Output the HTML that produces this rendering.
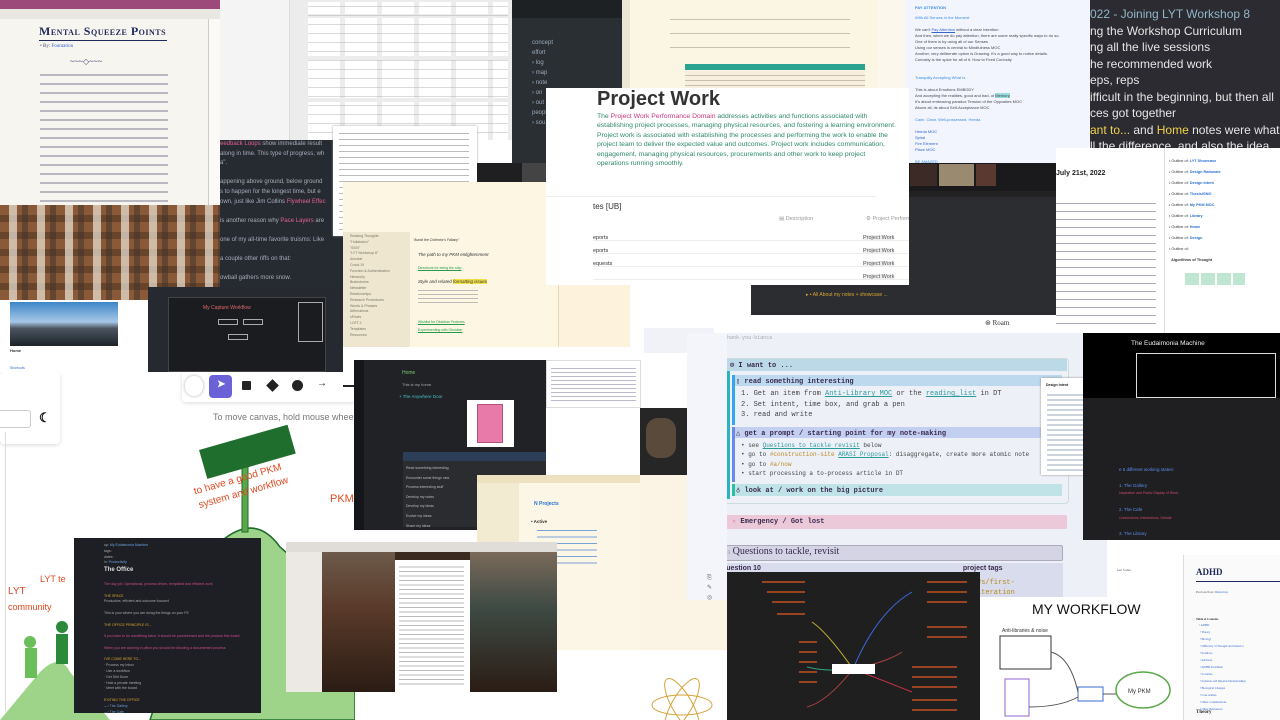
<!DOCTYPE html>
<html><head><meta charset="utf-8"><style>
*{margin:0;padding:0;box-sizing:border-box}
body{width:1280px;height:720px;overflow:hidden;background:#fff;position:relative;font-family:"Liberation Sans",sans-serif}
.p{position:absolute;overflow:hidden}
.t{position:absolute;white-space:nowrap}
.m{font-family:"Liberation Mono",monospace}
</style></head><body>

<!-- Sketch canvas top center -->
<div class="p" style="left:220px;top:0;width:292px;height:140px;background:#ececec">
 <div class="p" style="left:0;top:0;width:70px;height:140px;background:#f4f4f4;border-right:1px solid #ddd"></div>
 <div style="position:absolute;left:88px;top:2px;width:200px;height:140px;background:repeating-linear-gradient(90deg,#fff 0 32px,#ececec 32px 37px)"></div>
 <div style="position:absolute;left:88px;top:0;width:200px;height:140px;background:repeating-linear-gradient(0deg,transparent 0 38px,#ececec 38px 42px)"></div>
 <div style="position:absolute;left:88px;top:0;width:200px;height:140px;background:repeating-linear-gradient(180deg,transparent 0 6px,rgba(150,150,150,.35) 6px 7px,transparent 7px 9px)"></div>
</div>

<!-- Mental squeeze points -->
<div class="p" style="left:0;top:0;width:220px;height:205px;background:#f7f5ef">
 <div class="p" style="left:0;top:0;width:220px;height:9px;background:#9c4a7a"></div>
 <div class="p" style="left:0;top:9px;width:220px;height:10px;background:#e9e7e2"></div>
 <div class="p" style="left:208px;top:19px;width:12px;height:190px;background:#fbfaf6;border-left:1px solid #ccc"></div>
 <div class="t" style="left:39px;top:24px;font:bold 12px 'Liberation Serif',serif;color:#1f2a5a;font-variant:small-caps;letter-spacing:.5px">Mental Squeeze Points</div>
 <div style="position:absolute;left:39px;top:40px;width:128px;height:1px;background:#1f2a5a"></div>
 <div class="t" style="left:40px;top:44px;font:5px serif;color:#447">• By: <span style="color:#36c">Fountation</span></div>
 <div class="t" style="left:70px;top:57px;font:8px serif;color:#447">~~~◇~~~</div>
 <div style="position:absolute;left:40px;top:70px;width:128px;height:135px;background:repeating-linear-gradient(180deg,transparent 0 4px,#b9b8c0 4px 6px,transparent 6px 9px)"></div>
</div>

<!-- Dark teal panel -->
<div class="p" style="left:512px;top:0;width:118px;height:165px;background:#2a2f33">
 <div class="p" style="left:0;top:0;width:118px;height:18px;background:#1d2124"></div>
 <div class="p" style="left:110px;top:0;width:8px;height:165px;background:#eee6d5"></div>
 <div style="position:absolute;left:20px;top:38px;font:6px sans-serif;color:#9ab;line-height:10px">concept<br>effort<br>› log<br>› map<br>› note<br>› on<br>› out<br>people<br>› sou</div>
</div>

<!-- Zotero cream -->
<div class="p" style="left:630px;top:0;width:250px;height:88px;background:#fbf5e3">
 <div style="position:absolute;left:40px;top:8px;width:180px;height:50px;background:repeating-linear-gradient(180deg,transparent 0 11px,#c9c2b0 11px 12px,transparent 12px 14px)"></div>
 <div style="position:absolute;left:55px;top:64px;width:180px;height:6px;background:#2aa38f"></div>
 <div style="position:absolute;left:55px;top:71px;width:180px;height:17px;background:repeating-linear-gradient(180deg,#f8f0dc 0 4px,#c7c0ae 4px 5px)"></div>
</div>
<div class="p" style="left:877px;top:0;width:28px;height:88px;background:#fbf7ec"></div>

<!-- Pay attention -->
<div class="p" style="left:905px;top:0;width:185px;height:163px;background:#f2f5fd">
 <div class="t" style="left:10px;top:5px;font:bold 4px sans-serif;color:#3a8be0">PAY ATTENTION</div>
 <div style="position:absolute;left:10px;top:15px;font:4px/6px sans-serif;color:#445">
 <span style="color:#3a8be0">With All Senses in the Moment</span><br><br>We can't <u style="color:#36c">Pay Attention</u> without a clear Intention<br>And then, when we do pay attention, there are some really specific ways to do so.<br>One of them is by using all of our Senses<br>Using our senses is central to Mindfulness MOC<br>Another, very deliberate option is Drawing. It's a good way to notice details.<br>Curiosity is the spice for all of it. How to Feed Curiosity<br><br><br><span style="color:#3a8be0">Tranquilly Accepting What Is</span><br><br>This is about Emotions EMBODY<br>And accepting the realities, good and bad, of <span style="background:#9dd">Memory</span><br>It's about embracing paradox Tension of the Opposites MOC<br>Above all, its about Self-Acceptance MOC<br><br><span style="color:#3a8be0">Calm. Clear. Well-possessed. Heeda</span><br><br><span style="color:#36c">Heeda MOC<br>Spiral<br>Fire Element<br>Place MOC</span><br><br><span style="color:#3a8be0">BE AMAZED</span></div>
</div>

<!-- Dark LYT workshop -->
<div class="p" style="left:1090px;top:0;width:190px;height:148px;background:#2b2b31">
 <div style="position:absolute;left:0;top:6px;font:12px/16.5px 'Liberation Sans',sans-serif;color:#e6e6e6;white-space:nowrap">
 <span style="color:#8fb7c9">022 - Joining LYT Workshop 8</span><br>ng the Workshop Curriculum<br>ng all the live sessions<br>he recommended work<br>eps, reps<br>ifficult in the beginning, but then all<br>ces got together<br><span style="color:#f0d34a">ant to...</span> and <span style="color:#f0d34a">Home</span> notes were what<br>ll the difference, and also the idea<br><i style="color:#a88ef0">ucture must be earned!</i></div>
</div>

<!-- Feedback dark -->
<div class="p" style="left:220px;top:140px;width:125px;height:150px;background:#262b31">
 <div style="position:absolute;left:0;top:0;font:6px/9.6px sans-serif;color:#aab;white-space:nowrap"><span style="color:#e06090">eedback Loops</span> show immediate result<br>along in time. This type of progress, wh<br>a".<br><br>appening above ground, below ground<br>s to happen for the longest time, but e<br>own, just like Jim Collins <span style="color:#e06090">Flywheel Effec</span><br><br>is another reason why <span style="color:#e06090">Pace Layers</span> are<br><br>one of my all-time favorite truisms: Like<br><br>a couple other riffs on that:<br><br>owball gathers more snow.</div>
</div>

<!-- White doc -->
<div class="p" style="left:333px;top:126px;width:144px;height:110px;background:#fff;box-shadow:0 0 2px #999">
 <div style="position:absolute;left:6px;top:4px;width:130px;height:100px;background:repeating-linear-gradient(180deg,transparent 0 3px,#bbb 3px 4px,transparent 4px 6px)"></div>
</div>

<!-- Obsidian cream -->
<div class="p" style="left:343px;top:182px;width:287px;height:165px;background:#fdf6e3">
 <div class="p" style="left:0;top:50px;width:67px;height:115px;background:#efe6cf"></div>
 <div style="position:absolute;left:7px;top:52px;font:3.5px/5.8px sans-serif;color:#776;white-space:pre">Reading Thoughts
"Hullabaloo"
"0000"
"LYT Workshop 8"
Annotat
Covid-19
Function &amp; Authentication
Hierarchy
Brainstorms
Newsletter
Relationships
Research Procedures
Words &amp; Phrases
Affirmations
sPixels
LOFT-1
Templates
Resources</div>
 <div class="t" style="left:70px;top:56px;font:italic 3.5px sans-serif;color:#333">"Avoid the Collector's Fallacy"</div>
 <div class="t" style="left:75px;top:70px;font:italic 4.5px sans-serif;color:#333">The path to my PKM enlightenment</div>
 <div class="t" style="left:75px;top:84px;font:3.5px sans-serif;color:#2a9a4a;text-decoration:underline">Directions for being the ship</div>
 <div class="t" style="left:75px;top:97px;font:italic 4.5px sans-serif;color:#333">Style and related <span style="background:#f5e24a">formatting issues</span></div>
 <div style="position:absolute;left:75px;top:105px;width:60px;height:16px;background:repeating-linear-gradient(180deg,transparent 0 3px,#bbb 3px 4px)"></div>
 <div class="t" style="left:75px;top:138px;font:3.5px sans-serif;color:#2a9a4a;text-decoration:underline">Wishlist for Obsidian Features</div>
 <div class="t" style="left:75px;top:146px;font:3.5px sans-serif;color:#2a9a4a;text-decoration:underline">Experimenting with Obsidian</div>
 <div class="p" style="left:215px;top:0;width:72px;height:165px;background:#fdf3dd;border-left:1px solid #e4d9be"></div>
 <div style="position:absolute;left:222px;top:25px;width:55px;height:60px;background:repeating-linear-gradient(180deg,transparent 0 3px,#7bbf7b 3px 4px)"></div>
</div>
<div class="p" style="left:477px;top:163px;width:153px;height:19px;background:#1f1f22">
 <div class="p" style="left:45px;top:0;width:30px;height:19px;background:#444"></div>
 <div class="p" style="left:78px;top:1px;width:18px;height:18px;background:#6a4a3a"></div>
 <div class="p" style="left:100px;top:1px;width:18px;height:18px;background:#7a8aa0"></div>
</div>

<!-- Project Work -->
<div class="p" style="left:546px;top:88px;width:363px;height:197px;background:#fff">
 <div class="t" style="left:51px;top:0;font:bold 20px 'Liberation Sans',sans-serif;color:#333">Project Work</div>
 <div style="position:absolute;left:51px;top:24px;width:300px;font:6.8px/9.4px sans-serif;color:#2e8a6a">The <span style="color:#d0357a">Project Work Performance Domain</span> addresses activities and functions associated with establishing project processes, managing physical resources, and fostering a learning environment. Project work is associated with establishing the processes and performing the work to enable the project team to deliver the expected value and outcomes. Project work includes communication, engagement, managing physical resources, procurements and other work to keep project operations running smoothly.</div>
 <div style="position:absolute;left:0;top:108px;width:330px;height:1px;background:#eee"></div>
 <div class="t" style="left:47px;top:114px;font:8px sans-serif;color:#333">tes [UB]</div>
 <div class="t" style="left:233px;top:128px;font:5.5px sans-serif;color:#999">▤ Description</div>
 <div class="t" style="left:320px;top:128px;font:5.5px sans-serif;color:#999">⚙ Project Performa</div>
 <div style="position:absolute;left:47px;top:140px;width:316px;height:57px;background:repeating-linear-gradient(180deg,transparent 0 12px,#eee 12px 13px)"></div>
 <div class="t" style="left:317px;top:144px;font:5.5px/12.9px sans-serif;color:#555;white-space:pre"><span style="background:#eee">Project Work</span>
<span style="background:#eee">Project Work</span>
<span style="background:#eee">Project Work</span>
<span style="background:#eee">Project Work</span></div>
 <div class="t" style="left:47px;top:144px;font:5.5px/12.9px sans-serif;color:#333;white-space:pre">eports
eports
equests</div>
</div>

<!-- Dark video terminal -->
<div class="p" style="left:909px;top:163px;width:147px;height:152px;background:#2b2d31">
 <div class="p" style="left:0;top:0;width:147px;height:28px;background:#1a1a1c"></div>
 <div class="p" style="left:1px;top:1px;width:27px;height:22px;background:#3b2a26"></div>
 <div class="p" style="left:30px;top:1px;width:35px;height:22px;background:#9a8a70"></div>
 <div class="p" style="left:67px;top:1px;width:20px;height:22px;background:#5a3a30"></div>
 <div class="p" style="left:0;top:28px;width:147px;height:6px;background:#222"></div>
</div>
<div class="p" style="left:751px;top:285px;width:305px;height:30px;background:#2b2d31">
 <div class="t" style="left:55px;top:7px;font:5px sans-serif;color:#d9a530">▸ • All About my notes + showcase ...</div>
</div>

<!-- Roam -->
<div class="p" style="left:1056px;top:148px;width:224px;height:185px;background:#fff">
 <div class="t" style="left:0;top:22px;font:bold 7px sans-serif;color:#222">July 21st, 2022</div>
 <div style="position:absolute;left:0;top:50px;width:100px;height:130px;background:repeating-linear-gradient(180deg,transparent 0 5px,#aab 5px 6px,transparent 6px 8px)"></div>
 <div class="p" style="left:108px;top:0;width:116px;height:185px;border-left:1px solid #ddd;background:#fff">
  <div style="position:absolute;left:4px;top:8px;font:3.8px/11px sans-serif;color:#333;white-space:pre">• Outline of: <b style="color:#2a6fd0">LYT Showcase</b>
• Outline of: <b style="color:#2a6fd0">Design Rationale</b>
• Outline of: <b style="color:#2a6fd0">Design Intent</b>
• Outline of: <b style="color:#2a6fd0">ThesisIGNO</b>
• Outline of: <b style="color:#2a6fd0">My PKM MOC</b>
• Outline of: <b style="color:#2a6fd0">Library</b>
• Outline of: <b style="color:#2a6fd0">Home</b>
• Outline of: <b style="color:#2a6fd0">Design</b>
• Outline of:
  <b>Algorithms of Thought</b></div>
  <div class="p" style="left:20px;top:125px;width:60px;height:12px;background:repeating-linear-gradient(90deg,#bfe6d0 0 14px,transparent 14px 16px)"></div>
 </div>
</div>
<div class="p" style="left:980px;top:315px;width:76px;height:18px;background:#fff"><div class="t" style="left:5px;top:4px;font:7px serif;color:#333">⊛ Roam</div></div>

<!-- corkboard -->
<div class="p" style="left:0;top:205px;width:220px;height:95px;background:#8a5a38">
 <div style="position:absolute;inset:0;background:repeating-linear-gradient(90deg,transparent 0 9px,rgba(235,228,215,.7) 9px 17px,transparent 17px 22px,rgba(60,50,45,.5) 22px 28px),repeating-linear-gradient(0deg,transparent 0 10px,rgba(60,40,25,.45) 10px 17px)"></div>
</div>

<!-- mountain page -->
<div class="p" style="left:0;top:300px;width:148px;height:72px;background:#fff">
 <div class="p" style="left:10px;top:2px;width:108px;height:44px;background:linear-gradient(180deg,#3d86c8 0,#a7c7e6 45%,#4b5560 60%,#1d2228 100%)"></div>
 <div class="t" style="left:10px;top:48px;font:bold 4px sans-serif;color:#333">Home</div>
 <div class="t" style="left:10px;top:66px;font:3.5px sans-serif;color:#36c">Shortcuts</div>
</div>

<!-- capture workflow dark -->
<div class="p" style="left:148px;top:287px;width:195px;height:85px;background:#262a30">
 <div class="p" style="left:20px;top:10px;width:158px;height:75px;background:#1a1c20;border:1px solid #444"></div>
 <div class="t" style="left:55px;top:18px;font:5px sans-serif;color:#e06a6a">My Capture Workflow</div>
 <div class="p" style="left:70px;top:32px;width:20px;height:6px;border:1px solid #aaa"></div>
 <div class="p" style="left:95px;top:32px;width:20px;height:6px;border:1px solid #aaa"></div>
 <div class="p" style="left:80px;top:47px;width:20px;height:6px;border:1px solid #aaa"></div>
 <div class="p" style="left:150px;top:15px;width:25px;height:40px;border:1px solid #aaa"></div>
</div>

<!-- Excalidraw -->
<div class="p" style="left:0;top:372px;width:355px;height:348px;background:#fff">
 <div class="p" style="left:0;top:0;width:60px;height:72px;background:#fff;border-radius:4px;box-shadow:0 1px 4px rgba(0,0,0,.15)"></div>
 <div class="p" style="left:-5px;top:38px;width:36px;height:18px;border:1px solid #ccc;border-radius:3px"></div>
 <div class="t" style="left:39px;top:38px;font:bold 13px sans-serif;color:#111">☾</div>
 <div class="p" style="left:5px;top:60px;width:1px;height:280px;background:#ddd"></div>
 <div class="p" style="left:182px;top:0;width:173px;height:30px;background:#fff;box-shadow:0 1px 4px rgba(0,0,0,.15);border-radius:4px"></div>
 <div class="p" style="left:185px;top:4px;width:18px;height:20px;border-radius:10px;background:#fff;box-shadow:0 0 3px #aaa"></div>
 <div class="p" style="left:209px;top:3px;width:23px;height:23px;border-radius:4px;background:#6a62d6"></div>
 <div class="t" style="left:217px;top:7px;font:bold 10px sans-serif;color:#fff">➤</div>
 <div class="p" style="left:242px;top:9px;width:9px;height:9px;background:#222;border-radius:1px"></div>
 <div class="p" style="left:268px;top:9px;width:9px;height:9px;background:#222;transform:rotate(45deg)"></div>
 <div class="p" style="left:292px;top:8px;width:11px;height:11px;background:#222;border-radius:50%"></div>
 <div class="t" style="left:317px;top:6px;font:bold 10px sans-serif;color:#222">→</div>
 <div class="p" style="left:343px;top:13px;width:12px;height:2px;background:#222"></div>
 <div class="t" style="left:213px;top:40px;font:9px sans-serif;color:#777">To move canvas, hold mouse wheel or sp</div>
 <svg width="355" height="348" style="position:absolute;left:0;top:0">
  <path d="M150 348 L185 240 Q205 170 240 158 Q262 150 280 175 L320 210 Q340 200 355 205 L355 348 Z" fill="#9ed48a" stroke="#1e6b2a" stroke-width="1.5"/>
  <path d="M0 348 L40 300 Q60 280 70 300 L110 348 Z" fill="#9ed48a"/>
  <rect x="242" y="72" width="6" height="88" fill="#5aa84a" stroke="#1e6b2a"/>
  <g transform="rotate(-16 247 82)"><rect x="202" y="65" width="92" height="30" fill="#1f6e2e"/></g>
  <text x="190" y="112" transform="rotate(-16 230 100)" font-family="Liberation Sans" font-size="10" fill="#e04a20">to have a good PKM</text>
  <text x="195" y="127" transform="rotate(-16 230 115)" font-family="Liberation Sans" font-size="10" fill="#e04a20">system and workflow</text>
  <text x="330" y="130" font-family="Liberation Sans" font-size="11" fill="#e04a20">PKM</text>
  <text x="8" y="222" font-family="Liberation Sans" font-size="10" fill="#e04a20">LYT</text>
  <text x="8" y="238" font-family="Liberation Sans" font-size="9" fill="#e04a20">community</text>
  <text x="40" y="210" font-family="Liberation Sans" font-size="9" fill="#e04a20">LYT te</text>
  <circle cx="30" cy="270" r="6" fill="#6bbf5a"/><rect x="25" y="276" width="12" height="30" fill="#6bbf5a"/>
  <circle cx="62" cy="255" r="6" fill="#2a8a3a"/><rect x="56" y="262" width="12" height="30" fill="#2a8a3a"/>
 </svg>
</div>

<!-- Dark obsidian Home -->
<div class="p" style="left:354px;top:360px;width:192px;height:170px;background:#202225">
 <div class="p" style="left:0;top:0;width:10px;height:170px;background:#15161a"></div>
 <div class="t" style="left:48px;top:10px;font:5px sans-serif;color:#7ac96a">Home</div>
 <div class="t" style="left:48px;top:22px;font:4px sans-serif;color:#aaa">This is my home.</div>
 <div class="t" style="left:45px;top:34px;font:4.5px sans-serif;color:#4ac0d0">+ The Anywhere Door</div>
 <div class="p" style="left:113px;top:40px;width:47px;height:47px;background:#fff"></div>
 <div class="p" style="left:123px;top:44px;width:26px;height:39px;background:#e77aa8;border:1px solid #b4507a"></div>
 <div class="p" style="left:49px;top:92px;width:175px;height:75px;background:#2a2c30"></div>
 <div class="p" style="left:49px;top:92px;width:175px;height:9px;background:#2c3e58"></div>
 <div style="position:absolute;left:52px;top:104px;font:3.5px/9.6px sans-serif;color:#bbb;white-space:pre">Read something interesting
Encounter some things new
Process interesting stuff
Develop my notes
Develop my ideas
Evolve my ideas
Share my ideas</div>
</div>

<!-- Roam small white -->
<div class="p" style="left:546px;top:360px;width:95px;height:48px;background:#fff;border:1px solid #ddd">
 <div style="position:absolute;left:4px;top:4px;width:85px;height:38px;background:repeating-linear-gradient(180deg,transparent 0 3px,#bbc 3px 4px)"></div>
</div>
<div class="p" style="left:640px;top:288px;width:87px;height:72px;background:#fff"><div style="position:absolute;left:4px;top:40px;width:70px;height:25px;background:#f0f2f7"></div></div>
<div class="p" style="left:640px;top:408px;width:47px;height:67px;background:#262626"><div class="p" style="left:6px;top:10px;width:30px;height:40px;background:#5a4a3c;border-radius:12px"></div></div>

<!-- Logseq cream -->
<div class="p" style="left:477px;top:475px;width:163px;height:175px;background:#fcf6e6">
 <div class="p" style="left:0;top:0;width:42px;height:175px;background:#f3ead2"></div>
 <div class="p" style="left:0;top:0;width:163px;height:8px;background:#eee1c0"></div>
 <div class="t" style="left:57px;top:26px;font:bold 5px sans-serif;color:#2a6fd0">N Projects</div>
 <div class="t" style="left:54px;top:44px;font:bold 4.5px sans-serif;color:#333">• Active</div>
 <div style="position:absolute;left:60px;top:52px;width:60px;height:40px;background:repeating-linear-gradient(180deg,transparent 0 3px,#7aa3d9 3px 4px,transparent 4px 6.5px)"></div>
 <div class="t" style="left:60px;top:133px;font:bold 4.5px sans-serif;color:#333">readay</div>
</div>
<div class="p" style="left:640px;top:475px;width:87px;height:175px;background:#fbf4e4"></div>
<div class="p" style="left:640px;top:650px;width:87px;height:70px;background:#fff">
 <svg width="87" height="70"><g fill="none" stroke="#d4a33a" stroke-width="1"><ellipse cx="42" cy="55" rx="30" ry="10"/><ellipse cx="42" cy="55" rx="30" ry="10" transform="rotate(60 42 55)"/><ellipse cx="42" cy="55" rx="30" ry="10" transform="rotate(-60 42 55)"/></g></svg>
</div>

<!-- Office dark -->
<div class="p" style="left:74px;top:538px;width:187px;height:175px;background:#1e1f24">
 <div style="position:absolute;left:30px;top:5px;font:3.5px/5.8px sans-serif;color:#aaa">up: <span style="color:#6aa0e0">My Eudaimonia Machine</span><br>tags:<br>dates:<br>in: <span style="color:#6aa0e0">Productivity</span></div>
 <div class="t" style="left:30px;top:29px;font:bold 6px sans-serif;color:#ddd">The Office</div>
 <div style="position:absolute;left:30px;top:44px;width:150px;font:3.5px/5.8px sans-serif;color:#aaa"><span style="color:#d04a8a">The day job: Operational, process driven, templated and efficient work</span><br><br><span style="color:#d9a530">THE SPACE</span><br>Productive, efficient and outcome focused<br><br>This is your where you are doing the things on your FE<br><br><span style="color:#d9a530">THE OFFICE PRINCIPLE IS...</span><br><br><span style="color:#d04a8a">If you have to do something twice, it should be procedurised and the process fine-tuned.</span><br><br><span style="color:#d04a8a">When you are working in office you should be following a documented process</span><br><br><span style="color:#d9a530">I'VE COME HERE TO...</span><br>· Process my Inbox<br>· Use a workflow<br>· Get Shit Done<br>· Hold a private meeting<br>· Meet with the board<br><br><span style="color:#d9a530">EXITING THE OFFICE</span><br><span style="color:#6aa0e0">—› The Gallery<br>—› The Cafe<br>—› The Library<br>—› The Chamber</span></div>
</div>

<!-- Library photo -->
<div class="p" style="left:286px;top:542px;width:271px;height:150px;background:#3a2a20">
 <div class="p" style="left:0;top:0;width:36px;height:150px;background:#ece9e4"></div>
 <div class="p" style="left:0;top:0;width:271px;height:10px;background:#e0ddd8"></div>
 <div class="p" style="left:36px;top:10px;width:73px;height:140px;background:linear-gradient(180deg,#6d5a4a 0,#5a3a2a 40%,#2a1c14 100%)"></div>
 <div class="p" style="left:184px;top:10px;width:87px;height:140px;background:linear-gradient(180deg,#7a6a5a 0,#3e4a44 40%,#2a1c14 100%)"></div>
 <div class="p" style="left:109px;top:18px;width:75px;height:132px;background:#fff">
  <div style="position:absolute;left:4px;top:4px;width:65px;height:122px;background:repeating-linear-gradient(180deg,transparent 0 2.5px,#bbb 2.5px 3.5px,transparent 3.5px 4.5px)"></div>
 </div>
</div>

<!-- I want to panel -->
<div class="p" style="left:687px;top:333px;width:40px;height:267px;background:#f3f5fa">
 <div style="position:absolute;left:20px;top:240px;font:6px/10px sans-serif;color:#666">⎘<br>✎<br>◎<br>✕<br>≡</div>
</div>
<div class="p" style="left:727px;top:333px;width:380px;height:267px;background:#eef0f8">
 <div class="t" style="left:0;top:2px;font:5px monospace;color:#aaa">hank-you-bianca</div>
 <div class="p" style="left:-5px;top:25px;width:347px;height:146px;border:1px solid #cdd;border-radius:4px"></div>
 <div class="p" style="left:0;top:26px;width:340px;height:12px;background:#bcd9e8"></div>
 <div class="p" style="left:0;top:38px;width:3px;height:128px;background:#2bb3c0"></div>
 <div class="t m" style="left:3px;top:28px;font:bold 7px 'Liberation Mono',monospace;color:#3a2a50">⊙ I want to ...</div>
 <div class="p" style="left:5px;top:42px;width:330px;height:11px;background:#bcd9ee"></div>
 <div class="p" style="left:5px;top:42px;width:3px;height:50px;background:#35a7e8"></div>
 <div class="t m" style="left:9px;top:44px;font:bold 7px 'Liberation Mono',monospace;color:#3a2a50">▯ read something interesting</div>
 <div class="m" style="position:absolute;left:14px;top:56px;font:7px/10.5px 'Liberation Mono',monospace;color:#444;white-space:pre">1. Get an item from <u style="color:#2a9a9a">Anti-Library MOC</u> or the <u style="color:#2a9a9a">reading_list</u> in DT
2. Set intent, time box, and grab a pen
3. read and write</div>
 <div class="p" style="left:5px;top:94px;width:330px;height:11px;background:#c3cff0"></div>
 <div class="p" style="left:5px;top:94px;width:3px;height:55px;background:#6a8ae8"></div>
 <div class="t m" style="left:9px;top:96px;font:bold 7px 'Liberation Mono',monospace;color:#3a2a50">△ get a prompt / starting point for my note-making</div>
 <div class="m" style="position:absolute;left:14px;top:108px;font:6px/9.4px 'Liberation Mono',monospace;color:#444;white-space:pre">• see <u style="color:#2a9a9a">Questions to tackle revisit</u> below
• go to <span style="color:#b88a20">#construction-site</span> <u style="color:#2a9a9a">ARASI Proposal</u>: disaggregate, create more atomic note
• go to <span style="color:#b88a20">#a/now</span>
• start processing a to-process article in DT</div>
 <div class="p" style="left:5px;top:151px;width:330px;height:12px;background:#bfe3e6"></div>
 <div class="p" style="left:5px;top:151px;width:3px;height:12px;background:#2bc0a0"></div>
 <div class="t m" style="left:9px;top:153px;font:bold 7px 'Liberation Mono',monospace;color:#3a2a50">♁ look at / work on the big picture</div>
 <div class="p" style="left:-4px;top:182px;width:344px;height:14px;background:#ebc9d9;border-left:3px solid #e04a6a"></div>
 <div class="t m" style="left:5px;top:184px;font:bold 7px 'Liberation Mono',monospace;color:#3a2a50"><span style="color:#e04a6a">✧</span> Emergency / Got lost</div>
 <div class="p" style="left:-6px;top:212px;width:342px;height:16px;background:#d4d4e4;border:1px solid #aab;border-radius:2px"></div>
 <div class="t" style="left:-3px;top:213px;font:10px 'Liberation Serif',serif;color:#3a2a50"><span style="font-size:5px;color:#888">H3</span> Questions to tackle, revisit</div>
 <div class="p" style="left:-4px;top:230px;width:340px;height:37px;background:#d8dcec"></div>
 <div class="t" style="left:-5px;top:232px;font:bold 7px 'Liberation Sans',sans-serif;color:#3a2a50">question 10 <span style="margin-left:200px">project</span>  tags</div>
 <div class="t m" style="left:250px;top:245px;font:7px/10px 'Liberation Mono',monospace;color:#b88a20">#s/first-<br>iteration</div>
</div>

<!-- Design intent -->
<div class="p" style="left:1041px;top:378px;width:125px;height:97px;background:#fff;box-shadow:0 0 2px #888">
 <div class="t" style="left:5px;top:5px;font:bold 3.5px sans-serif;color:#222">Design Intent</div>
 <div style="position:absolute;left:6px;top:14px;width:110px;height:80px;background:repeating-linear-gradient(180deg,transparent 0 2.5px,#9ab 2.5px 3.5px,transparent 3.5px 5px)"></div>
</div>

<!-- Eudaimonia -->
<div class="p" style="left:1083px;top:333px;width:197px;height:207px;background:#1f1f22">
 <div class="p" style="left:0;top:0;width:197px;height:65px;background:#000"></div>
 <div class="t" style="left:48px;top:7px;font:6.5px sans-serif;color:#eee">The Eudaimonia Machine</div>
 <div class="p" style="left:53px;top:20px;width:140px;height:45px;border:1px solid #ddd"></div>
 <div style="position:absolute;left:36px;top:133px;font:4.5px/7.8px sans-serif;color:#5a8ee8"><span style="color:#5a8ee8">e 5 different working states:</span><br><br>1. The Gallery<br><span style="color:#d04a6a;font-size:3.5px">Inspiration and Public Display of Work</span><br><br>2. The Cafe<br><span style="color:#d04a6a;font-size:3.5px">Connections, Interactions, Debate</span><br><br>3. The Library<br><span style="color:#d04a6a;font-size:3.5px">Quiet Research, Idea Development</span><br><br>4. The Office</div>
</div>
<div class="p" style="left:1107px;top:540px;width:173px;height:20px;background:#fff"></div>
<div class="p" style="left:1107px;top:560px;width:76px;height:40px;background:#fff">
 <div class="t" style="left:10px;top:8px;font:3.5px serif;color:#555">Get Some</div>
</div>

<!-- Mind map -->
<div class="p" style="left:727px;top:572px;width:253px;height:148px;background:#1f1f1f">
 <svg width="253" height="148" style="position:absolute;left:0;top:0"><g fill="none" stroke-width="1">
  <path d="M126 97 Q150 40 185 20" stroke="#3a6ae0"/><path d="M126 97 Q160 110 185 120" stroke="#c03040"/>
  <path d="M126 97 Q100 60 85 50" stroke="#c0b030"/><path d="M126 97 Q100 130 80 135" stroke="#b04040"/>
  <path d="M126 97 Q160 90 175 80" stroke="#b04040"/><path d="M126 97 Q100 100 80 95" stroke="#30a080"/></g>
  <g stroke="#c05020" stroke-width="1.5"><path d="M35 10 H78 M40 20 H78 M45 30 H78 M50 42 H78 M72 70 H90 M72 80 H90 M72 90 H90 M72 100 H90 M72 110 H90 M200 10 H240 M200 20 H240 M200 30 H240 M200 55 H240 M200 65 H240 M185 95 H230 M185 105 H230 M185 115 H230 M185 128 H230 M185 138 H230"/></g>
  <rect x="105" y="92" width="43" height="10" fill="#fff"/>
 </svg>
</div>

<!-- MY WORKFLOW -->
<div class="p" style="left:980px;top:597px;width:203px;height:123px;background:#fff">
 <div class="t" style="left:52px;top:4px;font:14px 'Liberation Sans',sans-serif;color:#111">MY WORKFLOW</div>
 <svg width="203" height="123" style="position:absolute;left:0;top:0" font-family="Liberation Sans">
  <text x="22" y="35" font-size="5" fill="#333">Anti-libraries &amp; noise</text>
  <rect x="20" y="39" width="51" height="33" fill="none" stroke="#333"/>
  <rect x="98" y="90" width="25" height="14" fill="none" stroke="#3a6ad0"/>
  <rect x="25" y="82" width="24" height="37" fill="none" stroke="#9060d0"/>
  <ellipse cx="163" cy="93" rx="27" ry="18" fill="none" stroke="#5aa84a" stroke-width="1.5"/>
  <text x="148" y="96" font-size="6" fill="#333">My PKM</text>
  <path d="M71 55 Q90 60 98 95 M49 110 Q80 110 98 100 M123 97 H136" fill="none" stroke="#555"/>
 </svg>
</div>

<!-- ADHD -->
<div class="p" style="left:1183px;top:555px;width:97px;height:165px;background:#fafafa;border-left:1px solid #ddd">
 <div class="t" style="left:12px;top:12px;font:bold 9px 'Liberation Serif',serif;color:#1f2a5a">ADHD</div>
 <div class="p" style="left:12px;top:26px;width:85px;height:1px;background:#1f2a5a"></div>
 <div class="t" style="left:12px;top:35px;font:3px serif;color:#555">Previous Note: <span style="color:#36c">Distraction</span></div>
 <div class="t" style="left:12px;top:62px;font:bold 3px serif;color:#333">Table of Contents</div>
 <div style="position:absolute;left:15px;top:67px;font:3px/7px serif;color:#36c">• ADHD<br>&nbsp;• Theory<br>&nbsp;• Biology<br>&nbsp;• Difficulty of Thought and behavior<br>&nbsp;• Positives<br>&nbsp;• Advisors<br>&nbsp;• ADHD Treatment<br>&nbsp;• Societies<br>&nbsp;• Isolation and Impaired Relationships<br>&nbsp;• Biological Changes<br>&nbsp;• Case studies<br>&nbsp;• Other considerations<br>&nbsp;• Other References</div>
 <div class="t" style="left:12px;top:155px;font:bold 5px serif;color:#333">Theory</div>
</div>

</body></html>
